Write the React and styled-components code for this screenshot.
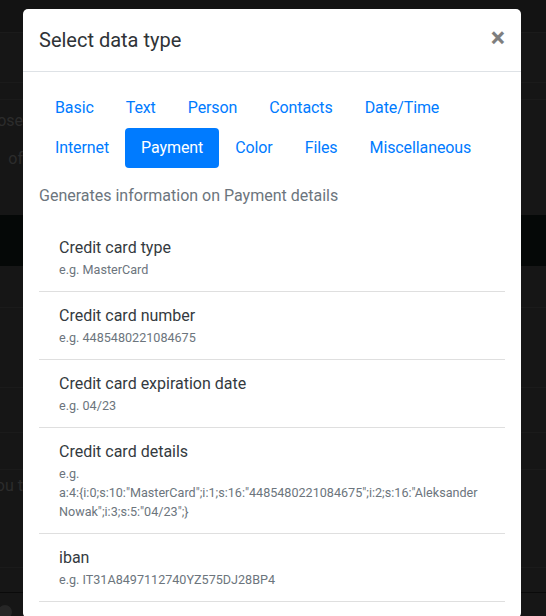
import React from 'react';
import styled, { createGlobalStyle } from 'styled-components';

const GlobalStyle = createGlobalStyle`
  html, body {
    margin: 0;
    padding: 0;
    background: #161616;
    overflow: hidden;
  }
  * {
    box-sizing: border-box;
  }
`;

/* ---------- dimmed page behind the modal ---------- */

const Page = styled.div`
  height: 616px;
  background: #161616;
  font-family: Roboto, 'Liberation Sans', sans-serif;
  color: #2c2c2c;
  display: flex;
  flex-direction: column;
`;

const BgRow = styled.div`
  height: ${(p) => p.h}px;
  flex: none;
  display: flex;
  align-items: ${(p) => p.align || 'center'};
  background: ${(p) => p.bg || 'transparent'};
  border-bottom: ${(p) => (p.line ? `1px solid ${p.line}` : 'none')};
`;

const Cut = styled.div`
  width: 23px;
  overflow: hidden;
  display: flex;
  justify-content: flex-end;
  white-space: nowrap;
  font-size: 16px;
`;

const Circle = styled.div`
  width: 14px;
  height: 14px;
  border-radius: 50%;
  background: #262626;
  margin-left: -2px;
  margin-top: 12px;
`;

/* ---------- modal ---------- */

const Overlay = styled.div`
  position: fixed;
  inset: 0;
  overflow: hidden;
`;

const Dialog = styled.div`
  width: 498px;
  margin: 9px 0 0 23px;
  background: #fff;
  border-radius: 5px;
  font-family: Roboto, 'Liberation Sans', sans-serif;
  color: #343a40;
`;

const Header = styled.div`
  display: flex;
  align-items: center;
  padding: 16px;
  border-bottom: 1px solid #dee2e6;
`;

const Title = styled.h5`
  margin: 0;
  font-size: 20px;
  font-weight: 400;
  line-height: 30px;
  color: #2f3337;
`;

const Close = styled.button`
  margin: 0 0 4px auto;
  border: none;
  background: transparent;
  padding: 0;
  font-family: Roboto, 'Liberation Sans', sans-serif;
  font-size: 27px;
  font-weight: 700;
  line-height: 26px;
  color: #000;
  opacity: 0.5;
  cursor: pointer;
`;

const Body = styled.div`
  padding: 16px;
`;

const Nav = styled.div`
  display: flex;
  flex-wrap: wrap;
`;

const NavLink = styled.a`
  display: block;
  padding: 8px 16px;
  font-size: 16px;
  line-height: 24px;
  letter-spacing: -0.1px;
  border-radius: 4px;
  cursor: pointer;
  color: ${(p) => (p.active ? '#fff' : '#007bff')};
  background: ${(p) => (p.active ? '#007bff' : 'transparent')};
`;

const Lead = styled.p`
  margin: 16px 0;
  font-size: 16px;
  line-height: 24px;
  color: #6c757d;
`;

const List = styled.div`
  display: flex;
  flex-direction: column;
`;

const Item = styled.div`
  padding: 12px 20px;
  border-bottom: 1px solid #dfdfdf;
`;

const ItemTitle = styled.div`
  font-size: 16px;
  line-height: 24px;
  color: #343a40;
`;

const ItemSub = styled.div`
  font-size: 12.6px;
  line-height: 19px;
  color: #6c757d;
`;

const Word = styled.span`
  white-space: nowrap;
`;

const tabs = [
  'Basic',
  'Text',
  'Person',
  'Contacts',
  'Date/Time',
  'Internet',
  'Payment',
  'Color',
  'Files',
  'Miscellaneous',
];

const items = [
  { title: 'Credit card type', sub: 'e.g. MasterCard' },
  { title: 'Credit card number', sub: 'e.g. 4485480221084675' },
  { title: 'Credit card expiration date', sub: 'e.g. 04/23' },
  {
    title: 'Credit card details',
    sub: 'e.g. a:4:{i:0;s:10:"MasterCard";i:1;s:16:"4485480221084675";i:2;s:16:"Aleksander Nowak";i:3;s:5:"04/23";}',
  },
  { title: 'iban', sub: 'e.g. IT31A8497112740YZ575DJ28BP4' },
];

// only break the example text at spaces, like the original does
const Sub = ({ text }) => (
  <ItemSub>
    {text.split(' ').map((w, i) => (
      <React.Fragment key={i}>
        {i > 0 && ' '}
        <Word>{w}</Word>
      </React.Fragment>
    ))}
  </ItemSub>
);

export default function App() {
  return (
    <>
      <GlobalStyle />
      <Page>
        <BgRow h={33} bg="#131313" line="#1b1b1b" />
        <BgRow h={50} line="#1b1b1b" />
        <BgRow h={17} line="#1b1b1b" />
        <BgRow h={40}>
          <Cut>Choose</Cut>
        </BgRow>
        <BgRow h={36}>
          <Cut>of</Cut>
        </BgRow>
        <BgRow h={39} />
        <BgRow h={51} bg="#050807" />
        <BgRow h={42} line="#1b1b1b" />
        <BgRow h={80} line="#1b1b1b" />
        <BgRow h={45} line="#1b1b1b" />
        <BgRow h={37} line="#1b1b1b" />
        <BgRow h={30}>
          <Cut>you t</Cut>
        </BgRow>
        <BgRow h={68} line="#1b1b1b" />
        <BgRow h={25} line="#0a0a0a" />
        <BgRow h={23} align="flex-start">
          <Circle />
        </BgRow>
      </Page>

      <Overlay>
        <Dialog>
          <Header>
            <Title>Select data type</Title>
            <Close aria-label="Close">×</Close>
          </Header>
          <Body>
            <Nav>
              {tabs.map((t) => (
                <NavLink key={t} active={t === 'Payment'}>
                  {t}
                </NavLink>
              ))}
            </Nav>
            <Lead>Generates information on Payment details</Lead>
            <List>
              {items.map((it) => (
                <Item key={it.title}>
                  <ItemTitle>{it.title}</ItemTitle>
                  <Sub text={it.sub} />
                </Item>
              ))}
            </List>
          </Body>
        </Dialog>
      </Overlay>
    </>
  );
}
